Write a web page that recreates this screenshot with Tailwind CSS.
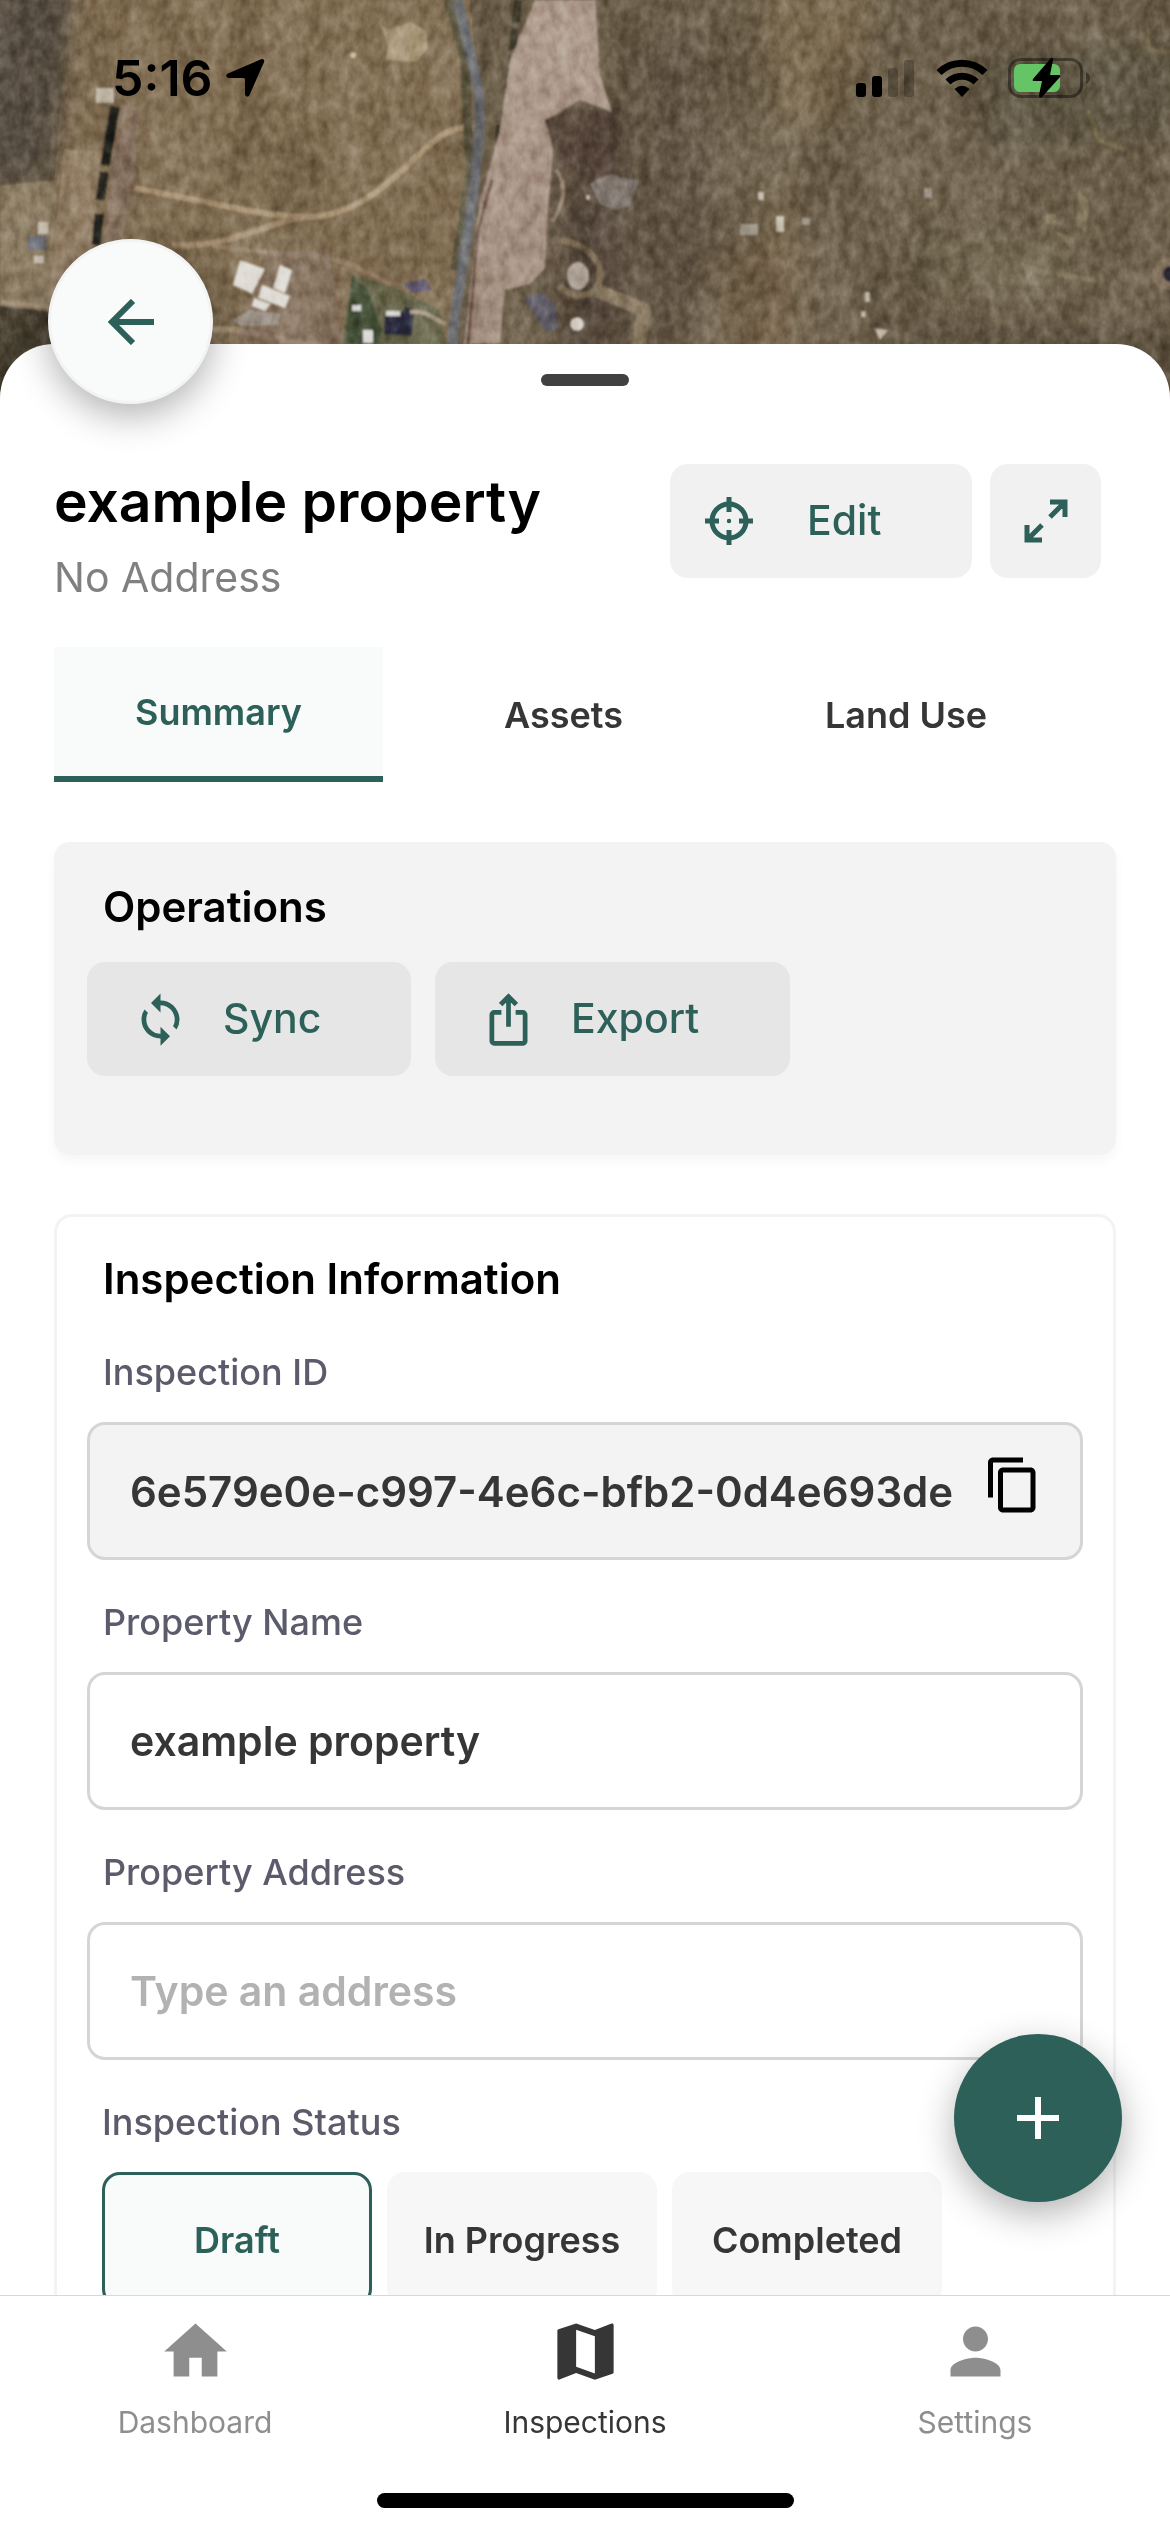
<!DOCTYPE html>
<html lang="en">
<head>
<meta charset="utf-8">
<meta name="viewport" content="width=device-width, initial-scale=1">
<title>example property – Inspection</title>
<script src="https://cdn.jsdelivr.net/npm/@tailwindcss/browser@4"></script>
</head>
<body class="bg-white font-['Inter',sans-serif] text-black">
<div class="relative flex h-screen flex-col overflow-hidden bg-white">

  <!-- Aerial map behind the sheet -->
  <svg class="absolute left-0 top-0 h-[420px] w-full" viewBox="0 0 1170 420" preserveAspectRatio="xMidYMin slice" aria-hidden="true">
    <defs>
      <filter id="soft" x="-5%" y="-5%" width="110%" height="110%"><feGaussianBlur stdDeviation="1.2"/></filter>
      <filter id="haze" x="-30%" y="-30%" width="160%" height="160%"><feGaussianBlur stdDeviation="14"/></filter>
      <filter id="grain" x="0" y="0" width="100%" height="100%" color-interpolation-filters="sRGB">
        <feTurbulence type="fractalNoise" baseFrequency="0.1 0.07" numOctaves="3" seed="8"/>
        <feColorMatrix values=".7 0 0 0 .17  .7 0 0 0 .17  .7 0 0 0 .17  0 0 0 0 1"/>
      </filter>
      <filter id="patches" x="0" y="0" width="100%" height="100%" color-interpolation-filters="sRGB">
        <feTurbulence type="fractalNoise" baseFrequency="0.022 0.009" numOctaves="3" seed="21"/>
        <feColorMatrix values=".8 0 0 0 .12  .8 0 0 0 .12  .8 0 0 0 .12  0 0 0 0 1"/>
      </filter>
    </defs>
    <rect width="1170" height="420" fill="#6a5d48"/>
    <path d="M70 0H470L480 110L452 344H40Z" fill="#7e6b50"/>
    <g filter="url(#haze)">
      <path d="M-20 -20H72L52 170L-20 195Z" fill="#544c40"/>
      <path d="M560 115L625 105L630 300L600 420H560Z" fill="#55463a"/>
      <path d="M640 60L690 20L720 200L690 344H640Z" fill="#5f5140"/>
      <path d="M760 -20H880L850 110L790 130L740 340H790V200Z" fill="#78674d"/>
      <path d="M730 250L800 230V400H720Z" fill="#796750"/>
      <path d="M990 60L1180 40V130L980 150Z" fill="#5c5341"/>
      <path d="M900 230H1060L1080 300L930 290Z" fill="#71664f"/>
      <path d="M900 330H1180V430H900Z" fill="#5b4f3d"/>
    </g>
    <g filter="url(#soft)">
      <path d="M0 185L58 180L50 305L0 300Z" fill="#897960"/>
      <path d="M-5 306L50 312L60 420H-5Z" fill="#443c2e"/>
      <path d="M0 302L55 308" stroke="#9c8970" stroke-width="5"/>
      <path d="M64 149L102 152L94 245L60 330L48 305Z" fill="#958168"/>
      <path d="M122 105L140 108L134 185L122 245L105 245L112 160Z" fill="#8a7562"/>
      <path d="M115 107L105 165M104 172L100 200M99 214L96 245" stroke="#22241d" stroke-width="9" fill="none"/>
      <path d="M134 188C200 200 260 216 308 217C385 216 425 128 462 128H474" stroke="#a99375" stroke-width="6" fill="none"/>
      <path d="M172 245C232 248 265 222 308 216" stroke="#a28c70" stroke-width="6" fill="none"/>
      <path d="M212 245C262 256 320 252 350 264L390 284" stroke="#957f66" stroke-width="5" fill="none"/>
      <path d="M213 330C240 325 265 340 320 344" stroke="#a38f75" stroke-width="6" fill="none"/>
      <path d="M268 250H330L345 344H235L250 300Z" fill="#857060" opacity=".6"/>
      <path d="M240 260L265 269L252 294L233 285ZM280 265L292 270L285 293L273 288ZM262 285L290 296L285 308L258 298ZM254 298L271 304L265 311L252 306Z" fill="#dedad3"/>
      <path d="M232 320L250 310L280 314L278 325L240 326Z" fill="#a0968c"/>
      <path d="M352 274L400 290L440 310L446 344H342Z" fill="#626145"/>
      <path d="M352 276L368 290L382 330L378 344H345Z" fill="#424d35"/>
      <path d="M403 284L425 279L432 290L412 293Z" fill="#5a5368"/>
      <path d="M385 316L403 312L405 307L414 309L412 336L384 334Z" fill="#2a2b3c"/>
      <path d="M386 311H400V316H386ZM352 305H361V311H352ZM363 330H373V343H363Z" fill="#d8d7d3"/>
      <path d="M410 312C430 310 436 322 447 324" stroke="#a69682" stroke-width="4" fill="none"/>
      <path d="M380 25L388 30L410 22L426 30L428 48L416 62L386 60L388 46Z" fill="#a59375"/>
      <circle cx="353" cy="55" r="3" fill="#c9b99b"/>
      <path d="M448 0L465 60L470 170L455 270" stroke="#5c5640" stroke-width="9" fill="none"/>
      <path d="M518 0L508 100M500 125V165L494 180" stroke="#3d382b" stroke-width="8" fill="none" stroke-dasharray="22 6"/>
      <path d="M535 0H595L600 75L612 112L580 100L560 112L545 120L553 150L548 210L545 268L530 284L505 290L500 344H464L480 200L500 130L510 60Z" fill="#a69283"/>
      <path d="M468 344L478 230L492 180" stroke="#6e5546" stroke-width="3" fill="none"/>
      <path d="M458 0C468 50 480 80 480 115C476 210 460 260 452 344" stroke="#66676c" stroke-width="10" fill="none"/>
      <path d="M545 120L575 108L612 112L608 175L560 165Z" fill="#544036" opacity=".6"/>
      <path d="M556 170C568 185 564 205 552 222" stroke="#978570" stroke-width="4" fill="none"/>
      <path d="M552 240C580 240 600 255 600 275C600 300 570 300 558 285" stroke="#7b6c54" stroke-width="7" fill="none"/>
      <path d="M598 291L644 310L638 350" stroke="#85755d" stroke-width="14" fill="none" stroke-linejoin="round"/>
      <path d="M524 298L542 292L556 306L558 328L546 332Z" fill="#5e5b66"/>
      <path d="M590 184L600 178L612 174L622 178L640 180L634 194L630 206L616 210L600 204Z" fill="#7c726a"/>
      <ellipse cx="578" cy="276" rx="11" ry="14" fill="#b4a99e"/>
      <circle cx="577" cy="324" r="7" fill="#d8d1c8"/>
      <path d="M740 224H758V235H740ZM802 218H810V225H802ZM924 188H932V198H924Z" fill="#a0988a"/>
      <path d="M776 216H784V232H776ZM758 192H764V200H758ZM865 292H870V302H865ZM861 311H866V317H861ZM874 328L888 330L880 340ZM586 195H590V200H586ZM38 222H48V234H38ZM34 256H44V263H34ZM96 88H114V103H96Z" fill="#c3b9aa"/>
      <path d="M28 236H46V250H28Z" fill="#6d7078"/>
      <path d="M1078 190L1088 200L1086 232L1076 225ZM1046 214H1056V224H1046ZM1056 232L1076 238L1070 248Z" fill="#85795f"/>
      <path d="M1020 262L1036 268L1028 280Z" fill="#8d8067"/>
      <path d="M1030 270L1095 280" stroke="#7b6e55" stroke-width="5"/>
      <circle cx="1168" cy="274" r="16" fill="#857561"/><circle cx="1171" cy="274" r="8" fill="#2c2833"/>
      <path d="M1088 110L1098 140L1130 152M1148 30L1150 50L1170 52" stroke="#75684c" stroke-width="4" fill="none"/>
    </g>
    <rect width="1170" height="420" filter="url(#patches)" class="mix-blend-soft-light" opacity=".5"/>
    <rect width="1170" height="420" filter="url(#grain)" class="mix-blend-soft-light" opacity=".8"/>
  </svg>

  <!-- Status bar -->
  <header class="relative flex h-[344px] shrink-0 items-start justify-between pl-28 pr-[78px] pt-[48px]">
    <div class="flex h-[60px] items-center gap-3">
      <span class="text-[50px] font-semibold leading-[60px]">5:16</span>
      <svg class="size-10" viewBox="0 0 40 40"><path d="M36 1.200C38.200.2 40 2 39 4.200L24.500 37C23.500 39.400 20 39 20 36V21.500Q20 20 18.500 20H4C1 20 .4 16.800 3 15.600Z"/></svg>
    </div>
    <div class="flex h-[60px] items-center gap-5">
      <svg class="h-10 w-[60px]" viewBox="0 0 60 40"><rect x="0" y="25" width="10" height="14" rx="3"/><rect x="16" y="18" width="10" height="21" rx="3"/><g opacity=".25"><rect x="32" y="10" width="10" height="29" rx="3"/><rect x="48" y="2" width="10" height="37" rx="3"/></g></svg>
      <svg class="h-10 w-[52px]" viewBox="0 0 52 40"><g fill="none" stroke="#000" stroke-width="7"><path d="M3 14.500A33 33 0 0 1 49 14.500"/><path d="M12 24A20 20 0 0 1 40 24"/></g><path d="M26 39L18.500 31Q26 24.500 33.500 31Z"/></svg>
      <svg class="h-[42px] w-[84px]" viewBox="0 0 84 42"><rect x="1.500" y="2.500" width="72" height="37" rx="11" fill="none" stroke="#000" stroke-opacity=".4" stroke-width="3"/><path d="M78 15Q82 17 82 21T78 27Z" opacity=".4"/><rect x="6" y="7" width="46" height="28" rx="6" fill="#65c466"/><path d="M43 1L25 22Q24 24 26 24H34L31 38Q31 42 34 40L52 20Q53 18 51 18H42L45 3Q45 0 43 1Z"/></svg>
    </div>
  </header>

  <!-- Sheet -->
  <main class="relative min-h-0 flex-1 rounded-t-[54px] bg-white">
    <button aria-label="Back" class="absolute -top-[105px] left-12 z-10 flex size-[165px] items-center justify-center rounded-full border-3 border-[#f3f3f3] bg-[#f9fbfa] shadow-[0_12px_36px_rgba(0,0,0,0.3)]">
      <svg class="size-[46px]" viewBox="0 0 46 46" fill="none" stroke="#2c6058" stroke-width="6"><path d="M46 23H4M25 2L4 23L25 44"/></svg>
    </button>

    <div class="h-full overflow-y-auto px-[54px] [scrollbar-width:none]">
      <div class="mx-auto mt-[30px] h-3 w-[88px] rounded-full bg-[#414141]"></div>

      <div class="mt-[78px] flex items-start justify-between pr-[15px]">
        <div>
          <h1 class="text-[57px] font-semibold leading-[76px]">example property</h1>
          <p class="text-[41px] leading-[74px] text-[#808080]">No Address</p>
        </div>
        <div class="flex gap-[18px] text-[#2c6058]">
          <button class="flex h-[114px] w-[302px] items-center gap-[54px] rounded-[18px] bg-[#f1f1f1] pl-[35px] text-[41px] font-medium">
            <svg class="size-12" viewBox="0 0 48 48" fill="none" stroke="currentColor" stroke-width="5"><circle cx="24" cy="24" r="17"/><path d="M24 0V15M24 33V48M0 24H14M34 24H48"/><circle cx="24" cy="24" r="2.200" fill="currentColor" stroke="none"/></svg>
            Edit
          </button>
          <button aria-label="Expand" class="flex h-[114px] w-[111px] items-center justify-center rounded-[18px] bg-[#f1f1f1]">
            <svg class="size-11" viewBox="0 0 44 44" fill="none" stroke="currentColor" stroke-width="5"><path d="M26 3H41V18M41 3L26 18M18 41H3V26M3 41L18 26"/></svg>
          </button>
        </div>
      </div>

      <div class="mt-[33px] flex gap-10 text-[36px] font-semibold" role="tablist">
        <button role="tab" aria-selected="true" class="h-[135px] border-b-6 border-[#2c6058] bg-[#f9fbfa] px-[81px] text-[#2c6058]">Summary</button>
        <button role="tab" aria-selected="false" class="h-[135px] px-[81px] text-[#363636]">Assets</button>
        <button role="tab" aria-selected="false" class="h-[135px] px-[81px] text-[#363636]">Land Use</button>
      </div>

      <section class="mt-[60px] h-[313px] rounded-[16px] bg-[#f3f3f3] px-[33px] pt-[34px] shadow-[0_6px_12px_rgba(0,0,0,0.04)]">
        <h2 class="px-4 text-[42px] font-semibold leading-[62px]">Operations</h2>
        <div class="mt-6 flex gap-6 text-[41px] font-medium text-[#2c6058]">
          <button class="flex h-[114px] w-[324px] items-center gap-[34px] rounded-[18px] bg-[#e6e6e6] pl-[45px]">
            <svg class="size-[57px]" viewBox="0 0 24 24" fill="currentColor"><path d="M12 4V1L8 5l4 4V6c3.310 0 6 2.690 6 6 0 1.010-.25 1.970-.7 2.800l1.460 1.460A7.930 7.930 0 0 0 20 12c0-4.420-3.580-8-8-8zm0 14c-3.310 0-6-2.690-6-6 0-1.010.25-1.970.7-2.800L5.240 7.740A7.930 7.930 0 0 0 4 12c0 4.420 3.580 8 8 8v3l4-4-4-4v3z"/></svg>
            Sync
          </button>
          <button class="flex h-[114px] w-[355px] items-center gap-[34px] rounded-[18px] bg-[#e6e6e6] pl-[45px]">
            <svg class="size-[57px]" viewBox="0 0 24 24" fill="currentColor"><path d="m16 5-1.420 1.420-1.590-1.590V15h-1.980V4.830L9.420 6.420 8 5l4-4 4 4zm4 5v11c0 1.100-.9 2-2 2H6a2 2 0 0 1-2-2V10a2 2 0 0 1 2-2h3v2H6v11h12V10h-3V8h3a2 2 0 0 1 2 2z"/><path d="M8 5l4-4 4 4z"/></svg>
            Export
          </button>
        </div>
      </section>

      <section class="mt-[59px] rounded-[18px] border-3 border-[#f3f3f3] px-[30px] pb-12 pt-[31px]">
        <h2 class="px-4 text-[42px] font-semibold leading-[62px]">Inspection Information</h2>

        <label for="inspection-id" class="mt-8 block px-4 text-[36px] font-medium leading-[60px] text-[#5c5b6b]">Inspection ID</label>
        <div class="mt-5 flex h-[138px] items-center rounded-[18px] border-3 border-[#d5d5d5] bg-[#f3f3f3] pl-10 pr-[37px]">
          <input id="inspection-id" readonly value="6e579e0e-c997-4e6c-bfb2-0d4e693de" class="h-full min-w-0 flex-1 bg-transparent text-[42px] font-semibold text-[#363636] outline-none">
          <button aria-label="Copy inspection ID" class="mb-3 ml-4">
            <svg class="size-[60px]" viewBox="0 0 24 24"><path d="M16 1H4c-1.100 0-2 .9-2 2v14h2V3h12V1zm3 4H8c-1.100 0-2 .9-2 2v14c0 1.100.9 2 2 2h11c1.100 0 2-.9 2-2V7c0-1.100-.9-2-2-2zm0 16H8V7h11v14z"/></svg>
          </button>
        </div>

        <label for="property-name" class="mt-8 block px-4 text-[36px] font-medium leading-[60px] text-[#5c5b6b]">Property Name</label>
        <input id="property-name" value="example property" class="mt-5 block h-[138px] w-full rounded-[18px] border-3 border-[#d5d5d5] bg-white px-10 text-[41px] font-semibold text-[#363636] outline-none">

        <label for="property-address" class="mt-8 block px-4 text-[36px] font-medium leading-[60px] text-[#5c5b6b]">Property Address</label>
        <input id="property-address" placeholder="Type an address" class="mt-5 block h-[138px] w-full rounded-[18px] border-3 border-[#d5d5d5] bg-white px-10 text-[41px] font-semibold text-[#363636] outline-none placeholder:text-[#b2b2b2]">

        <fieldset class="px-[15px]">
          <legend class="pt-8 text-[36px] font-medium leading-[60px] text-[#5c5b6b]">Inspection Status</legend>
          <div class="mt-5 flex gap-[15px] text-[36px] font-semibold text-[#363636]">
            <label class="flex h-[135px] w-[270px] items-center justify-center rounded-[18px] border-3 border-[#2c6058] bg-[#f9fbfa] text-[#2c6058]"><input type="radio" name="status" checked class="sr-only">Draft</label>
            <label class="flex h-[135px] w-[270px] items-center justify-center rounded-[18px] bg-[#f7f7f7]"><input type="radio" name="status" class="sr-only">In Progress</label>
            <label class="flex h-[135px] w-[270px] items-center justify-center rounded-[18px] bg-[#f7f7f7]"><input type="radio" name="status" class="sr-only">Completed</label>
          </div>
        </fieldset>
      </section>
    </div>

    <button aria-label="Add" class="absolute bottom-[93px] right-12 flex size-[168px] items-center justify-center rounded-full bg-[#2c6058] shadow-[0_12px_36px_rgba(0,0,0,0.3)]">
      <svg class="size-[42px]" viewBox="0 0 42 42" stroke="#fff" stroke-width="6"><path d="M0 21H42M21 0V42"/></svg>
    </button>
  </main>

  <!-- Bottom navigation -->
  <nav class="relative shrink-0 border-t border-[#d8d8d8] bg-white pb-6 pt-[18px]">
    <div class="grid grid-cols-3 text-[30px] leading-[42px] text-[#8e8e8e]">
      <a href="#dashboard" class="flex flex-col items-center gap-3">
        <svg class="size-[75px]" viewBox="0 0 24 24" fill="currentColor"><path d="M10 20v-6h4v6h5v-8h3L12 3 2 12h3v8z"/></svg>
        Dashboard
      </a>
      <a href="#inspections" class="flex flex-col items-center gap-3 text-[#363636]" aria-current="page">
        <svg class="size-[75px]" viewBox="0 0 24 24" fill="currentColor"><path d="M20.500 3l-.16.030L15 5.100 9 3 3.360 4.900c-.21.070-.36.250-.36.480V20.500c0 .28.220.5.500.5l.16-.030L9 18.900l6 2.100 5.640-1.900c.21-.070.360-.25.360-.48V3.500c0-.28-.22-.5-.5-.5zM15 19l-6-2.110V5l6 2.110V19z"/></svg>
        Inspections
      </a>
      <a href="#settings" class="flex flex-col items-center gap-3">
        <svg class="size-[75px]" viewBox="0 0 24 24" fill="currentColor"><path d="M12 12c2.210 0 4-1.790 4-4s-1.790-4-4-4-4 1.790-4 4 1.790 4 4 4zm0 2c-2.670 0-8 1.340-8 4v2h16v-2c0-2.660-5.330-4-8-4z"/></svg>
        Settings
      </a>
    </div>
    <div class="mx-auto mt-[50px] h-[15px] w-[417px] rounded-full bg-black"></div>
  </nav>
</div>
</body>
</html>
